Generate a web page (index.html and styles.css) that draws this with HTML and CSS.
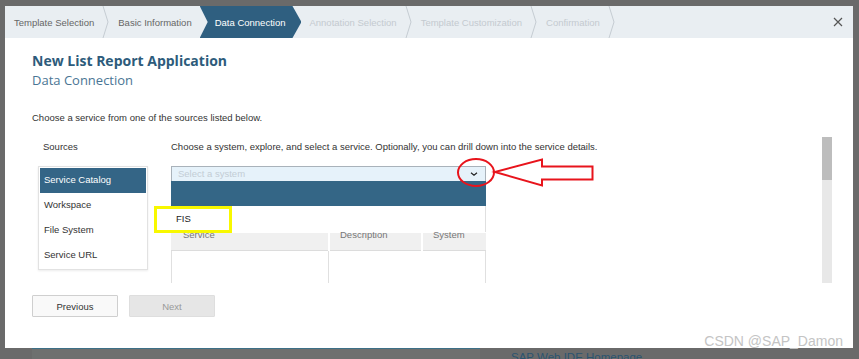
FILE: index.html
```html
<!DOCTYPE html>
<html lang="en">
<head>
  <meta charset="UTF-8">
  <meta name="viewport" content="width=device-width, initial-scale=1.0">
  <title>New List Report Application</title>
  <link rel="stylesheet" href="styles.css">
</head>
<body>
  <div class="screen">
    <div class="dialog">
      <div class="steps">
        <span class="step done first">Template Selection</span>
        <svg class="sep" viewBox="0 0 7 32"><polyline points="1,0 6,16 1,32"/></svg>
        <span class="step done">Basic Information</span>
        <span class="step active">Data Connection</span>
        <span class="step todo">Annotation Selection</span>
        <svg class="sep" viewBox="0 0 7 32"><polyline points="1,0 6,16 1,32"/></svg>
        <span class="step todo">Template Customization</span>
        <svg class="sep" viewBox="0 0 7 32"><polyline points="1,0 6,16 1,32"/></svg>
        <span class="step todo">Confirmation</span>
        <svg class="sep" viewBox="0 0 7 32"><polyline points="1,0 6,16 1,32"/></svg>
        <button class="close" aria-label="Close">
          <svg viewBox="0 0 10 10"><path d="M1 1L9 9M9 1L1 9"/></svg>
        </button>
      </div>

      <div class="content">
        <h1 class="title">New List Report Application</h1>
        <h2 class="subtitle">Data Connection</h2>
        <p class="intro">Choose a service from one of the sources listed below.</p>

        <div class="scroll">
          <div class="sources">
            <div class="label">Sources</div>
            <ul class="source-list">
              <li class="selected">Service Catalog</li>
              <li>Workspace</li>
              <li>File System</li>
              <li>Service URL</li>
            </ul>
          </div>

          <div class="service">
            <div class="label">Choose a system, explore, and select a service. Optionally, you can drill down into the service details.</div>
            <div class="select">
              <span class="placeholder">Select a system</span>
              <svg class="chevron" viewBox="0 0 8 4"><path d="M1 0.8L4 3.2L7 0.8"/></svg>
              <div class="popup">
                <div class="popup-bar"></div>
                <div class="popup-item">FIS</div>
              </div>
            </div>
            <div class="table">
              <div class="thead">
                <div class="th col-service">Service</div>
                <div class="th col-desc">Description</div>
                <div class="th col-system">System</div>
              </div>
              <div class="tbody">
                <div class="td col-service"></div>
                <div class="td col-rest"></div>
              </div>
            </div>
          </div>

          <div class="scrollbar"><div class="thumb"></div></div>
        </div>

        <div class="actions">
          <button class="btn">Previous</button>
          <button class="btn" disabled>Next</button>
        </div>
      </div>
    </div>

    <div class="page-footer">
      <div class="footer-nav"></div>
      <span class="footer-link">SAP Web IDE Homepage</span>
    </div>

    <!-- markup drawn on top of the screenshot -->
    <svg class="annotations" viewBox="0 0 859 359">
      <rect class="mark-yellow" x="155.5" y="207.5" width="75" height="24"/>
      <ellipse class="mark-red" cx="476" cy="172.5" rx="18" ry="13.5"/>
      <polygon class="mark-red" points="495,172 542,159.5 542,166.5 592.5,166.5 592.5,179.5 542,179.5 542,185.5"/>
    </svg>

    <div class="watermark">CSDN @SAP_Damon</div>
  </div>
</body>
</html>
```

FILE: styles.css
```css
body {
  margin: 0;
  background: #6a6a6a;
  font-family: 'Liberation Sans', Arial, sans-serif;
  font-size: 9.5px;
  color: #333;
  overflow: hidden;
}

.screen {
  position: relative;
  height: 359px;
  overflow: hidden;
}

.dialog {
  margin: 6px 6px 0 5px;
  height: 342px;
  background: #fff;
}

/* wizard steps */
.steps {
  display: flex;
  height: 32px;
  background: #e9eef2;
}

.step {
  display: flex;
  align-items: center;
  padding: 0 8px 0 9px;
  white-space: nowrap;
}

.step.done {
  color: #666;
}

.step.todo {
  color: #c4cad0;
}

.step.active {
  background: #2f5f80;
  color: #fff;
  padding: 0 16px 0 15px;
  clip-path: polygon(0 0, calc(100% - 9px) 0, 100% 50%, calc(100% - 9px) 100%, 0 100%, 8px 50%);
}

.step.active + .step {
  padding-left: 8px;
}

.sep {
  flex: none;
  width: 7px;
  height: 32px;
}

.sep polyline {
  fill: none;
  stroke: #c5ccd2;
  stroke-width: 1;
}

.close {
  margin-left: auto;
  margin-right: 10px;
  padding: 0;
  border: 0;
  background: none;
  display: flex;
  align-items: center;
}

.close svg {
  width: 10px;
  height: 10px;
}

.close path {
  stroke: #555;
  stroke-width: 1.2;
}

/* body of the dialog */
.content {
  padding: 14px 21px 0 27px;
}

.title {
  margin: 0;
  font: bold 14px/18px 'Open Sans', sans-serif;
  color: #2d5b7b;
}

.subtitle {
  margin: 2px 0 0;
  font: 13px/17px 'Open Sans', sans-serif;
  color: #4a7594;
}

.intro {
  margin: 22px 0 0;
  line-height: 14px;
}

.scroll {
  display: flex;
  margin-top: 12px;
  height: 146px;
  overflow: hidden;
}

.label {
  height: 20px;
  line-height: 20px;
  white-space: nowrap;
}

.sources {
  flex: none;
  width: 110px;
  margin-left: 6px;
}

.sources .label {
  padding-left: 5px;
}

.source-list {
  margin: 9px 0 0;
  padding: 1px;
  list-style: none;
  border: 1px solid #e2e2e2;
  box-shadow: 0 1px 2px rgba(0, 0, 0, 0.08);
}

.source-list li {
  height: 25px;
  line-height: 24px;
  padding-left: 4px;
}

.source-list .selected {
  background: #346586;
  color: #fff;
}

.service {
  flex: none;
  width: 315px;
  margin-left: 23px;
}

.select {
  position: relative;
  display: flex;
  align-items: center;
  box-sizing: border-box;
  height: 16px;
  margin-top: 9px;
  padding: 0 7px 1px 6px;
  border: 1px solid #a9b2ba;
  background: #e6f2fa;
}

.placeholder {
  color: #c3cdd5;
}

.chevron {
  margin-left: auto;
  width: 8px;
  height: 4px;
}

.chevron path {
  fill: none;
  stroke: #222;
  stroke-width: 1.2;
}

.popup {
  position: absolute;
  top: 100%;
  left: -1px;
  right: -1px;
  z-index: 2;
}

.popup-bar {
  height: 25px;
  background: #346686;
}

.popup-item {
  height: 26px;
  line-height: 26px;
  padding-left: 5px;
  background: #fff;
  border-right: 1px solid #e0e0e0;
  color: #222;
}

.table {
  margin-top: 51px;
}

.thead {
  display: flex;
  gap: 2px;
  height: 18px;
}

.th {
  box-sizing: border-box;
  background: #f0f0f0;
  border-bottom: 1px solid #dcdcdc;
  line-height: 4px;
  color: #777;
}

.col-service {
  width: 157px;
  padding-left: 12px;
}

.col-desc {
  width: 91px;
  padding-left: 10px;
}

.col-system {
  width: 63px;
  padding-left: 10px;
}

.tbody {
  display: flex;
  height: 40px;
}

.td {
  box-sizing: border-box;
  border-right: 1px solid #e0e0e0;
}

.tbody .col-service {
  border-left: 1px solid #e0e0e0;
  width: 158px;
}

.col-rest {
  flex: 1;
}

.scrollbar {
  margin-left: auto;
  flex: none;
  width: 10px;
  background: #e8e8e8;
}

.thumb {
  height: 43px;
  background: #bdbdbd;
}

.actions {
  display: flex;
  gap: 11px;
  margin-top: 12px;
}

.btn {
  width: 86px;
  height: 22px;
  padding: 0;
  font: 9.5px 'Liberation Sans', Arial, sans-serif;
  color: #333;
  background: #f9f9f9;
  border: 1px solid #cfcfcf;
  border-radius: 1px;
}

.btn:disabled {
  color: #999;
  background: #e6e6e6;
  border-color: #dedede;
}

/* page behind the dialog */
.page-footer {
  display: flex;
  height: 11px;
}

.footer-nav {
  margin-left: 32px;
  width: 448px;
  border-top: 1px solid #3d7087;
  background: #6e706f;
}

.footer-link {
  margin-left: 31px;
  padding-top: 2px;
  font-size: 11.5px;
  line-height: 14px;
  color: #2b5470;
  white-space: nowrap;
}

.annotations {
  position: absolute;
  top: 0;
  left: 0;
  width: 859px;
  height: 359px;
  pointer-events: none;
  z-index: 5;
}

.mark-yellow {
  fill: none;
  stroke: #f8f800;
  stroke-width: 3;
}

.mark-red {
  fill: none;
  stroke: #e8141c;
  stroke-width: 2;
}

.watermark {
  position: absolute;
  right: 16px;
  top: 333px;
  font-size: 14px;
  line-height: 16px;
  color: #c4c4c4;
  z-index: 6;
}
```
